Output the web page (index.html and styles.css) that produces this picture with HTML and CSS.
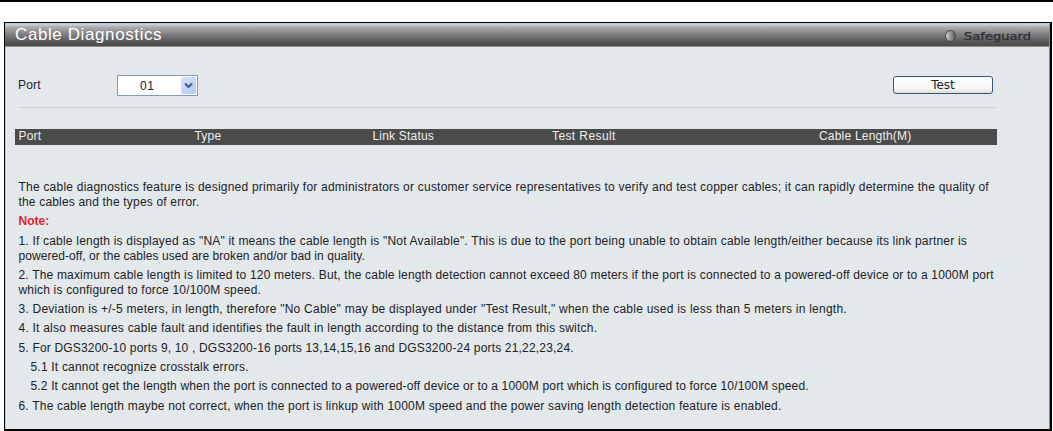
FILE: index.html
```html
<!DOCTYPE html>
<html lang="en">
<head>
<meta charset="utf-8">
<title>Cable Diagnostics</title>
<link rel="stylesheet" href="styles.css">
</head>
<body>
<main class="panel">
  <header class="titlebar">
    <h1 class="title">Cable Diagnostics</h1>
    <div class="brand"><span class="lamp"></span><svg class="brand-name" viewBox="0 0 68 16"><text x="0" y="11.5" textLength="67" lengthAdjust="spacingAndGlyphs">Safeguard</text></svg></div>
  </header>
  <section class="controls">
    <span class="label">Port</span>
    <div class="select"><span class="value">01</span><span class="arrow"><svg viewBox="0 0 15 17"><path d="M4 6.5l3.5 3.5L11 6.5" fill="none" stroke="#445b8c" stroke-width="2.2"/></svg></span></div>
    <button class="test">Test</button>
  </section>
  <div class="columns"><span>Port</span><span>Type</span><span>Link Status</span><span class="result">Test Result</span><span>Cable Length(M)</span></div>
  <section class="notes">
    <p class="intro">The cable diagnostics feature is designed primarily for administrators or customer service representatives to verify and test copper cables; it can rapidly determine the quality of<br><span class="snug">the cables and the types of error.</span></p>
    <p class="note">Note:</p>
    <p>1. If cable length is displayed as "NA" it means the cable length is "Not Available". This is due to the port being unable to obtain cable length/either because its link partner is<br><span class="tight">powered-off, or the cables used are broken and/or bad in quality.</span></p>
    <p class="snug">2. The maximum cable length is limited to 120 meters. But, the cable length detection cannot exceed 80 meters if the port is connected to a powered-off device or to a 1000M port<br>which is configured to force 10/100M speed.</p>
    <p class="wide">3. Deviation is +/-5 meters, in length, therefore "No Cable" may be displayed under "Test Result," when the cable used is less than 5 meters in length.</p>
    <p class="intro">4. It also measures cable fault and identifies the fault in length according to the distance from this switch.</p>
    <p class="snug">5. For DGS3200-10 ports 9, 10 , DGS3200-16 ports 13,14,15,16 and DGS3200-24 ports 21,22,23,24.</p>
    <p class="sub">5.1 It cannot recognize crosstalk errors.</p>
    <p class="sub close">5.2 It cannot get the length when the port is connected to a powered-off device or to a 1000M port which is configured to force 10/100M speed.</p>
    <p>6. The cable length maybe not correct, when the port is linkup with 1000M speed and the power saving length detection feature is enabled.</p>
  </section>
</main>
</body>
</html>
```
FILE: styles.css
```css
* { box-sizing: border-box; }
body {
  margin: 0;
  height: 431px;
  overflow: hidden;
  background: #fff;
  border-top: 2px solid #000;
  padding: 20px 1px 0 4px;
  font: 12px/15px "Liberation Sans", Arial, sans-serif;
  color: #222226;
}
.panel {
  height: 409px;
  background: #e3e8eb;
  border: 1px solid #000;
  border-right-width: 2px;
  border-bottom-width: 2px;
  box-shadow: inset 1px 1px #a8d5e5, inset -1px 0 #5b9db5;
}
.titlebar {
  height: 23px;
  margin: 1px 1px 0 0;
  display: flex;
  justify-content: space-between;
  background: linear-gradient(#d3d3d5 0, #aaaaac 15%, #838385 42%, #555557 78%, #4b4b4d 95%, #8c8c8e 96%);
}
.title {
  margin: 0 0 0 10px;
  font-size: 17px;
  line-height: 21px;
  font-weight: 400;
  letter-spacing: .6px;
  color: #fff;
}
.brand { display: flex; align-items: center; gap: 8px; padding-right: 17px; }
.lamp {
  width: 11px;
  height: 12px;
  border-radius: 50%;
  border: 1px solid #4a4a4c;
  background: linear-gradient(90deg, #cfcfd1, #8a8a8c 60%, #5a5a5c);
}
.brand-name { width: 68px; height: 16px; font: 10.5px "DejaVu Sans", sans-serif; fill: #303033; stroke: #303033; stroke-width: .3px; }
.controls {
  height: 39px;
  margin: 22px 54px 0 13px;
  padding: 6px 2px 0 0;
  display: flex;
  align-items: flex-start;
  border-bottom: 1px solid #cdd4d7;
}
.label { width: 99px; padding-top: 3px; letter-spacing: .2px; }
.select {
  width: 81px;
  height: 21px;
  display: flex;
  justify-content: space-between;
  background: #fff;
  border: 1px solid #7f9db9;
  padding: 1px;
}
.value { padding: 2px 0 0 21px; letter-spacing: .5px; }
.arrow { width: 15px; height: 17px; border-radius: 2px; background: linear-gradient(135deg, #d5e2fd, #b3c9f5); }
.arrow svg { display: block; }
.test {
  width: 100px;
  height: 18px;
  margin: 1px 1px 0 auto;
  padding: 0;
  border: 1px solid #34597d;
  border-radius: 3px;
  background: linear-gradient(#fff, #f6f6f3 75%, #dedbd1);
  font: 12px/15px "DejaVu Sans", sans-serif;
  color: #222;
}
.columns {
  height: 16px;
  margin: 21px 53px 0 10px;
  padding-left: 3.5px;
  display: grid;
  grid-template-columns: 176px 178px 179.5px 267px auto;
  background: #4b4b4b;
  color: #eee;
  letter-spacing: .2px;
}
.columns .result { letter-spacing: .4px; }
.notes { padding: 35px 0 0 13.5px; white-space: nowrap; letter-spacing: .2px; }
.notes p { margin: 0 0 4.3px; }
.notes .note { font-weight: bold; color: #e4242d; letter-spacing: 0; }
.notes .sub { padding-left: 12px; }
.notes .intro { letter-spacing: .222px; }
.notes .wide { letter-spacing: .238px; }
.notes .snug { letter-spacing: .18px; }
.notes .close { letter-spacing: .155px; }
.notes .tight { letter-spacing: .06px; }
```
